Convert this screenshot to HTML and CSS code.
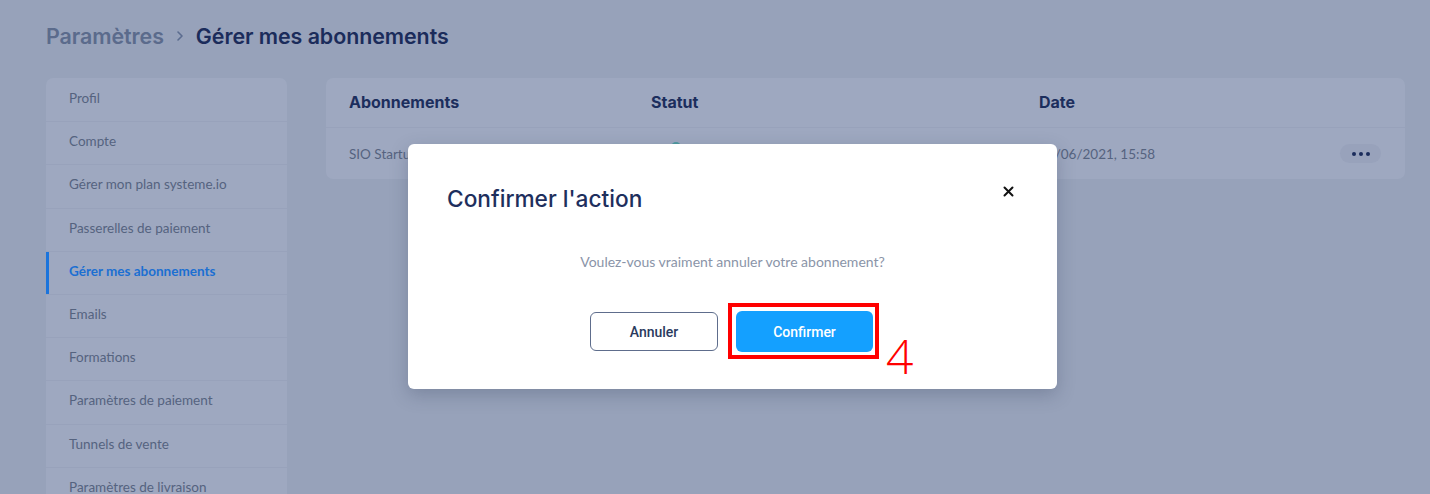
FILE: index.html
```html
<!DOCTYPE html>
<html lang="fr">
<head>
<meta charset="utf-8">
<title>Gérer mes abonnements</title>
<link rel="stylesheet" href="styles.css">
</head>
<body>
<div class="page">
  <div class="breadcrumb">
    <span class="crumb-muted">Paramètres</span>
    <svg class="crumb-sep" width="12" height="12" viewBox="0 0 12 12"><path d="M4 2l4 4-4 4" fill="none" stroke="#5b6c8f" stroke-width="1.6" stroke-linecap="round" stroke-linejoin="round"/></svg>
    <span class="crumb-current">Gérer mes abonnements</span>
  </div>
  <div class="layout">
    <nav class="sidebar">
      <div class="nav-item">Profil</div>
      <div class="nav-item">Compte</div>
      <div class="nav-item">Gérer mon plan systeme.io</div>
      <div class="nav-item">Passerelles de paiement</div>
      <div class="nav-item active">Gérer mes abonnements</div>
      <div class="nav-item">Emails</div>
      <div class="nav-item">Formations</div>
      <div class="nav-item">Paramètres de paiement</div>
      <div class="nav-item">Tunnels de vente</div>
      <div class="nav-item">Paramètres de livraison</div>
    </nav>
    <section class="content">
      <div class="table">
        <div class="row head">
          <div class="col c1">Abonnements</div>
          <div class="col c2">Statut</div>
          <div class="col c3">Date</div>
        </div>
        <div class="row body">
          <div class="col c1">SIO Startup</div>
          <div class="col c2"><span class="status-dot"></span></div>
          <div class="col c3">18/06/2021, 15:58</div>
          <div class="more"><span></span><span></span><span></span></div>
        </div>
      </div>
    </section>
  </div>

  <div class="modal">
    <div class="modal-head">
      <h2 class="modal-title">Confirmer l'action</h2>
      <svg class="close" width="11" height="11" viewBox="0 0 11 11"><path d="M1.5 1.5l8 8M9.5 1.5l-8 8" stroke="#111" stroke-width="2" stroke-linecap="round"/></svg>
    </div>
    <p class="modal-msg">Voulez-vous vraiment annuler votre abonnement?</p>
    <div class="modal-actions">
      <button class="btn btn-outline">Annuler</button>
      <span class="annotated">
        <button class="btn btn-primary">Confirmer</button>
        <span class="annot-box"></span>
        <span class="annot-num">4</span>
      </span>
    </div>
  </div>
</div>
</body>
</html>
```

FILE: styles.css
```css
* { box-sizing: border-box; }
html, body { margin: 0; padding: 0; }
body {
  background: #97a2ba;
  font-family: Lato, "Open Sans", sans-serif;
  width: 1430px;
  height: 494px;
  overflow: hidden;
}
.page {
  position: relative;
  height: 494px;
  padding: 22px 25px 0 46px;
}
.breadcrumb {
  display: flex;
  align-items: center;
  height: 27px;
  font-family: Inter, "Noto Sans", sans-serif;
  font-size: 21.4px;
  font-weight: 600;
  letter-spacing: -0.05px;
}
.crumb-muted { color: #5b6b8c; }
.crumb-sep { margin: 1px 10px 0 10px; }
.crumb-current { color: #1b2c5b; }

.layout {
  display: flex;
  gap: 39px;
  margin-top: 29px;
}
.sidebar {
  width: 241px;
  flex: none;
  background: #9ea8c0;
  border-radius: 7px;
  overflow: hidden;
}
.nav-item {
  height: 43.2px;
  display: flex;
  align-items: center;
  padding-left: 23px;
  padding-bottom: 4px;
  font-size: 13.5px;
  color: #55637f;
  border-top: 1px solid #98a2bb;
}
.nav-item:first-child { border-top: none; }
.nav-item.active {
  color: #1b6fd2;
  font-weight: 700;
  box-shadow: inset 3px 0 0 #1b74dc;
}

.content { flex: 1; }
.table {
  background: #9ea8c0;
  border-radius: 7px;
  overflow: hidden;
}
.row {
  position: relative;
  display: flex;
  align-items: center;
  padding-left: 23px;
}
.row.head {
  height: 50px;
  padding-bottom: 2px;
  font-family: Inter, "Noto Sans", sans-serif;
  font-weight: 700;
  font-size: 16px;
  color: #1c2e5d;
  border-bottom: 1px solid #98a2bb;
}
.row.body {
  height: 51px;
  font-size: 13.5px;
  color: #55637f;
}
.col.c1 { width: 302px; }
.col.c2 { width: 388px; }
.status-dot {
  display: inline-block;
  width: 10px;
  height: 10px;
  border-radius: 50%;
  background: #4f9aa0;
  margin-left: 20px;
  position: relative;
  top: -7px;
}
.more {
  position: absolute;
  right: 24px;
  top: 16px;
  width: 41px;
  height: 19px;
  border-radius: 10px;
  background: #98a2bb;
  display: flex;
  align-items: center;
  justify-content: center;
  gap: 3px;
}
.more span {
  width: 4px;
  height: 4px;
  border-radius: 50%;
  background: #1b2c5b;
}

.modal {
  position: absolute;
  left: 408px;
  top: 144px;
  width: 649px;
  height: 245px;
  background: #fff;
  border-radius: 6px;
  box-shadow: 0 6px 18px rgba(40, 50, 80, 0.25);
  padding: 37px 39px 0 39px;
}
.modal-head {
  display: flex;
  align-items: flex-start;
  justify-content: space-between;
}
.modal-title {
  margin: 0;
  font-family: Inter, Roboto, sans-serif;
  font-weight: 500;
  font-size: 22.7px;
  line-height: 36px;
  color: #1e2f5d;
}
.close { margin: 5px 4px 0 0; }
.modal-msg {
  margin: 36px 0 0 0;
  text-align: center;
  font-size: 14px;
  color: #8a94a8;
}
.modal-actions {
  display: flex;
  justify-content: center;
  align-items: center;
  gap: 18px;
  margin-top: 41px;
  padding-right: 2px;
}
.btn {
  font-family: Roboto, "Liberation Sans", sans-serif;
  font-size: 14px;
  font-weight: 500;
  border-radius: 6px;
  cursor: pointer;
}
.btn-outline {
  width: 128px;
  height: 39px;
  background: #fff;
  border: 1px solid #5e6d8c;
  color: #2a3a5e;
}
.btn-primary {
  width: 137px;
  height: 41px;
  background: #14a0ff;
  border: none;
  color: #fff;
}
.annotated {
  position: relative;
  display: inline-flex;
}
.annot-box {
  position: absolute;
  left: -8px;
  top: -8px;
  right: -6px;
  bottom: -7px;
  border: 4px solid #ff0000;
}
.annot-num {
  position: absolute;
  left: 150px;
  top: 21px;
  font-family: "Open Sans", "Liberation Sans", sans-serif;
  font-weight: 300;
  font-size: 48px;
  line-height: 48px;
  color: #ff0000;
}
```
